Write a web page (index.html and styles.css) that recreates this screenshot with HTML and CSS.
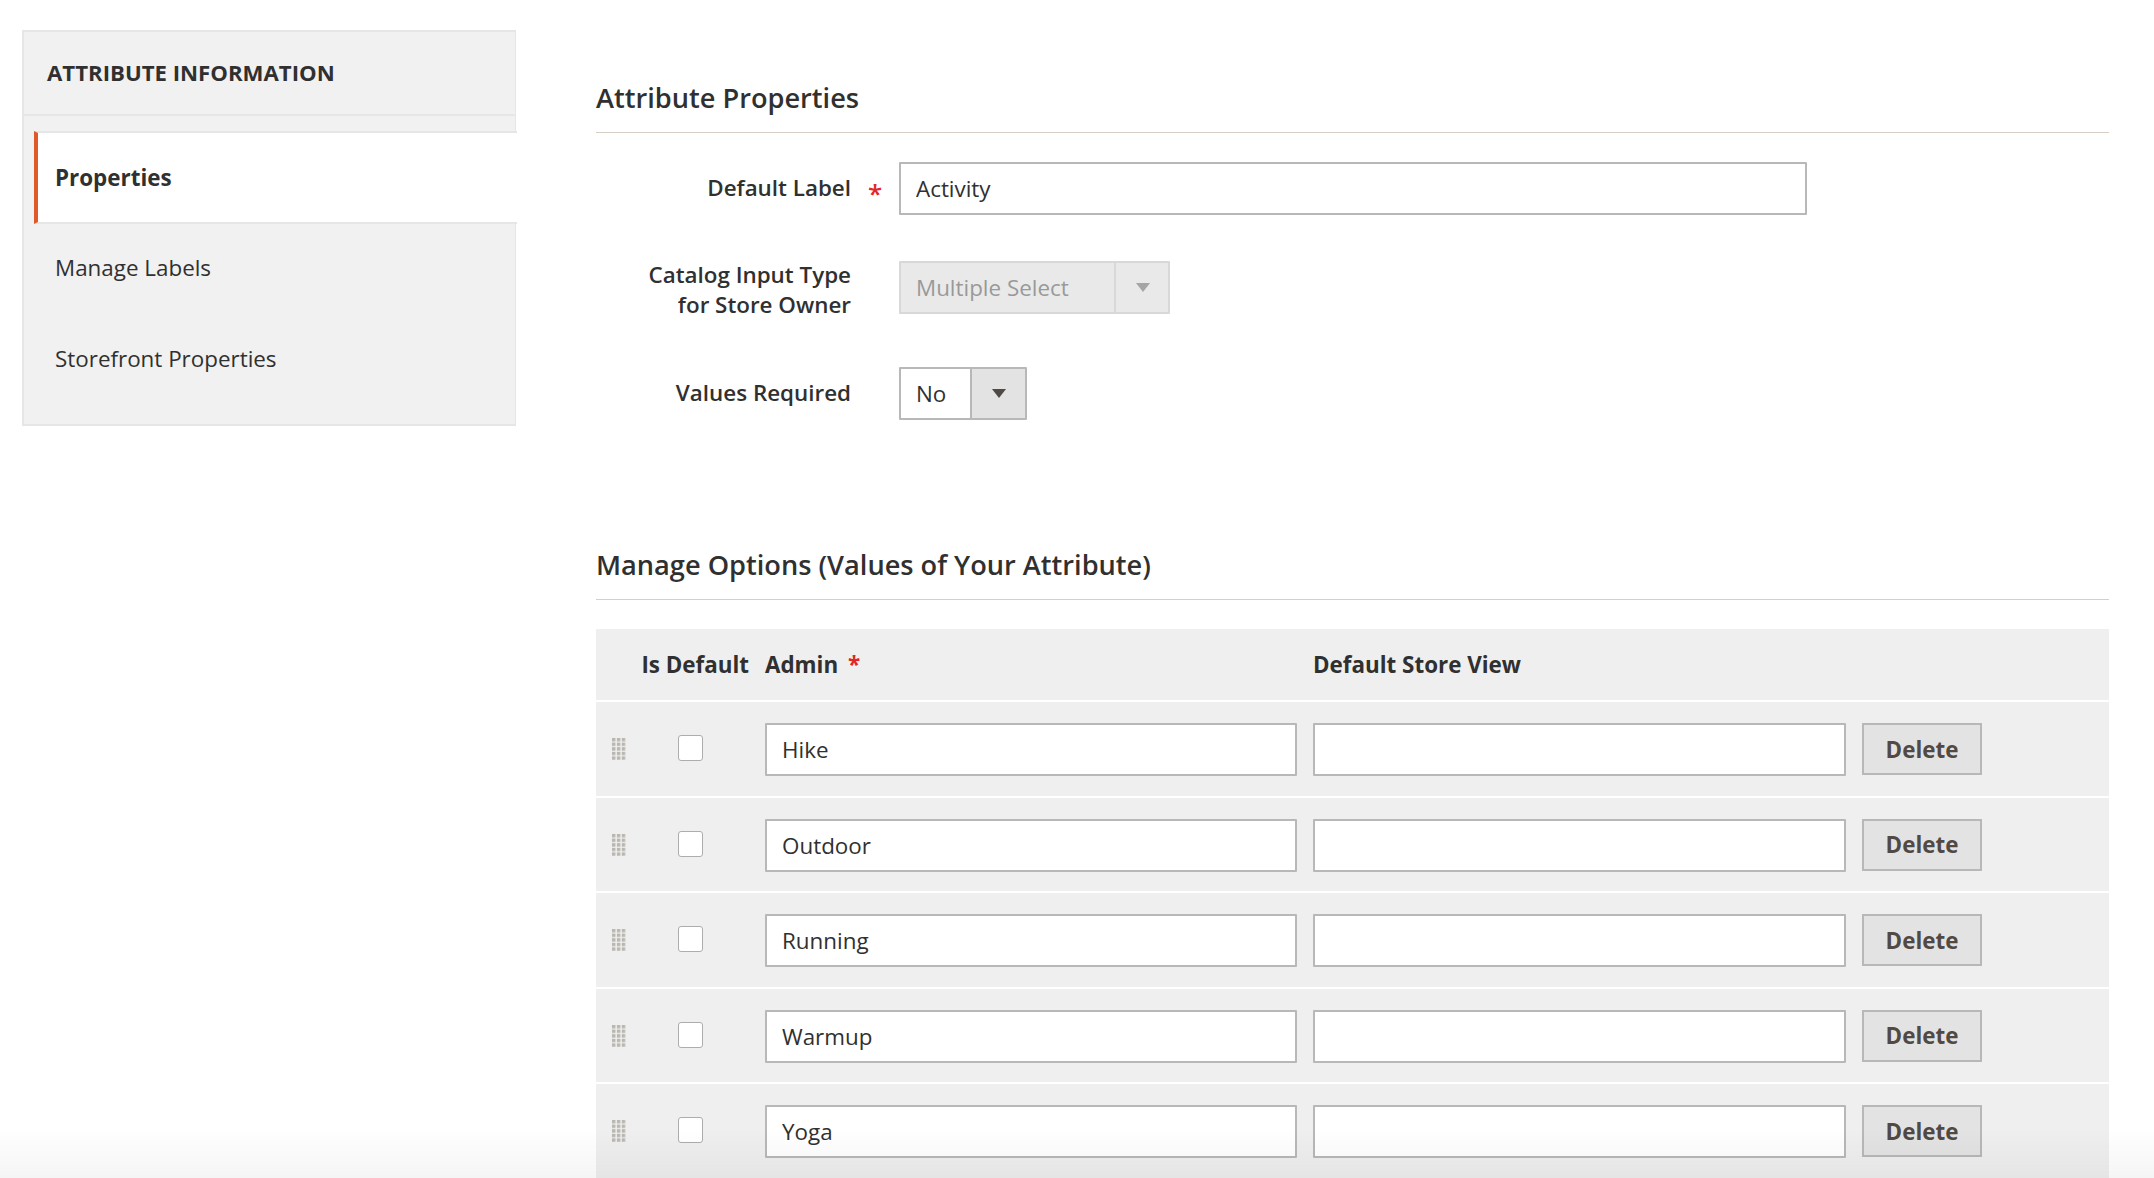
FILE: index.html
```html
<!DOCTYPE html>
<html lang="en">
<head>
    <meta charset="UTF-8">
    <title>Attribute Information</title>
    <link rel="stylesheet" href="styles.css">
</head>
<body>
    <div class="page">
        <aside class="side">
            <h3 class="side-title">ATTRIBUTE INFORMATION</h3>
            <ul class="side-nav">
                <li class="side-item active">Properties</li>
                <li class="side-item">Manage Labels</li>
                <li class="side-item">Storefront Properties</li>
            </ul>
        </aside>

        <main class="content">
            <h2 class="section-title">Attribute Properties</h2>
            <div class="fields">
                <div class="field">
                    <label class="field-label">Default Label</label>
                    <span class="field-req">*</span>
                    <input class="text-input wide" type="text" value="Activity">
                </div>
                <div class="field field-tall">
                    <label class="field-label">Catalog Input Type<br>for Store Owner</label>
                    <span class="field-req"></span>
                    <div class="fake-select disabled">
                        <span class="fake-value">Multiple Select</span>
                        <span class="fake-arrow"><i class="caret"></i></span>
                    </div>
                </div>
                <div class="field">
                    <label class="field-label">Values Required</label>
                    <span class="field-req"></span>
                    <div class="fake-select small">
                        <span class="fake-value">No</span>
                        <span class="fake-arrow"><i class="caret"></i></span>
                    </div>
                </div>
            </div>

            <h2 class="section-title second">Manage Options (Values of Your Attribute)</h2>
            <div class="options">
                <div class="opt-row opt-head">
                    <span></span>
                    <span class="opt-default-head">Is Default</span>
                    <span>Admin <em class="req-star">*</em></span>
                    <span>Default Store View</span>
                    <span></span>
                </div>
                <div class="opt-row">
                    <svg class="grip" width="14" height="22"><rect width="14" height="22" fill="url(#dots)"/></svg>
                    <span class="check-cell"><input class="check" type="checkbox"></span>
                    <input class="text-input" type="text" value="Hike">
                    <input class="text-input" type="text">
                    <button class="del-btn">Delete</button>
                </div>
                <div class="opt-row">
                    <svg class="grip" width="14" height="22"><rect width="14" height="22" fill="url(#dots)"/></svg>
                    <span class="check-cell"><input class="check" type="checkbox"></span>
                    <input class="text-input" type="text" value="Outdoor">
                    <input class="text-input" type="text">
                    <button class="del-btn">Delete</button>
                </div>
                <div class="opt-row">
                    <svg class="grip" width="14" height="22"><rect width="14" height="22" fill="url(#dots)"/></svg>
                    <span class="check-cell"><input class="check" type="checkbox"></span>
                    <input class="text-input" type="text" value="Running">
                    <input class="text-input" type="text">
                    <button class="del-btn">Delete</button>
                </div>
                <div class="opt-row">
                    <svg class="grip" width="14" height="22"><rect width="14" height="22" fill="url(#dots)"/></svg>
                    <span class="check-cell"><input class="check" type="checkbox"></span>
                    <input class="text-input" type="text" value="Warmup">
                    <input class="text-input" type="text">
                    <button class="del-btn">Delete</button>
                </div>
                <div class="opt-row">
                    <svg class="grip" width="14" height="22"><rect width="14" height="22" fill="url(#dots)"/></svg>
                    <span class="check-cell"><input class="check" type="checkbox"></span>
                    <input class="text-input" type="text" value="Yoga">
                    <input class="text-input" type="text">
                    <button class="del-btn">Delete</button>
                </div>
            </div>
        </main>
    </div>
    <div class="bottom-fade"></div>

    <svg width="0" height="0" class="defs">
        <defs>
            <pattern id="dots" width="4.9" height="4.6" patternUnits="userSpaceOnUse">
                <rect width="3.4" height="3.4" fill="#bab6b0"/>
            </pattern>
        </defs>
    </svg>
</body>
</html>
```

FILE: styles.css
```css
* {
    box-sizing: border-box;
}

html, body {
    margin: 0;
    height: 1178px;
    overflow: hidden;
    background-color: #fff;
}

body {
    font-family: "Open Sans", sans-serif;
    font-size: 22.4px;
    color: #303030;
}

.page {
    display: flex;
    padding: 30px 45px 0 22px;
}

/* left tabs */
.side {
    flex: 0 0 494px;
    height: 396px;
    background-color: #f1f1f1;
    border: 2px solid #e6e6e6;
    border-right-width: 1px;
}

.side-title {
    margin: 0;
    height: 84px;
    padding: 0 0 2px 23px;
    display: flex;
    align-items: center;
    font-size: 22.2px;
    font-weight: 700;
    border-bottom: 2px solid #e6e6e6;
}

.side-nav {
    list-style: none;
    margin: 15px 0 0;
    padding: 0;
}

.side-item {
    height: 91px;
    padding: 0 0 5px 31px;
    display: flex;
    align-items: center;
}

.side-item.active {
    height: 93px;
    margin: 0 -2px 0 10px;
    padding: 0 0 0 17px;
    font-weight: 700;
    background-color: #fff;
    border-left: 4px solid #e0592a;
    border-top: 2px solid #e6e6e6;
    border-bottom: 2px solid #e6e6e6;
}

/* main column */
.content {
    flex: 1;
    margin-left: 80px;
}

.section-title {
    margin: 0;
    height: 103px;
    padding-top: 48px;
    line-height: 40px;
    font-size: 27.2px;
    font-weight: 600;
    border-bottom: 1px solid #d6d0c4;
    color: #303030;
}

.section-title.second {
    height: 95px;
    padding-top: 40px;
}

.fields {
    display: flex;
    flex-direction: column;
    gap: 46px;
    padding: 29px 0 85px;
}

.field {
    display: flex;
    align-items: flex-start;
}

.field-tall {
    height: 60px;
}

.field-label {
    width: 255px;
    text-align: right;
    font-weight: 600;
    line-height: 30px;
    padding-top: 11px;
}

.field-tall .field-label {
    padding-top: 0;
    margin-top: -1px;
}

.field-req {
    width: 48px;
    text-align: center;
    color: #e22626;
    font-size: 26px;
    font-weight: 600;
    line-height: 30px;
    padding-top: 16px;
}

.text-input {
    height: 53px;
    padding: 0 15px;
    font-family: "Open Sans", sans-serif;
    font-size: 22.4px;
    color: #303030;
    background-color: #fff;
    border: 2px solid #b8b8b8;
    border-radius: 1px;
    outline: none;
}

.text-input.wide {
    width: 908px;
}

.fake-select {
    display: flex;
    height: 53px;
    width: 128px;
    background-color: #fff;
    border: 2px solid #b8b8b8;
    border-radius: 1px;
}

.fake-value {
    flex: 1;
    padding-left: 15px;
    line-height: 50px;
    color: #303030;
}

.fake-arrow {
    flex: 0 0 55px;
    display: flex;
    align-items: center;
    justify-content: center;
    background-color: #e3e3e3;
    border-left: 2px solid #b8b8b8;
}

.caret {
    width: 0;
    height: 0;
    border-left: 7px solid transparent;
    border-right: 7px solid transparent;
    border-top: 9px solid #514943;
}

.fake-select.disabled {
    width: 271px;
    background-color: #e9e9e9;
    border-color: #d8d8d8;
}

.disabled .fake-value {
    color: #999;
}

.disabled .fake-arrow {
    flex-basis: 54px;
    padding-left: 1px;
    background-color: #e9e9e9;
    border-left-color: #d8d8d8;
}

.disabled .caret {
    border-top-color: #a5a5a5;
}

/* options table */
.options {
    margin-top: 29px;
    background-color: #efefef;
}

.opt-row {
    display: grid;
    grid-template-columns: 16px 105px 532px 533px 120px;
    column-gap: 16px;
    align-items: start;
    height: 95.5px;
    padding: 21px 0 0 16px;
    border-top: 2px solid #fff;
}

.opt-head {
    height: 71px;
    padding-top: 0;
    align-items: center;
    border-top: 0;
    font-weight: 700;
}

.opt-default-head {
    justify-self: end;
    white-space: nowrap;
}

.req-star {
    font-style: normal;
    color: #e22626;
    margin-left: 4px;
}

.grip {
    margin-top: 15px;
}

.check-cell {
    display: flex;
    justify-content: center;
    padding: 12px 12px 0 0;
}

.check {
    appearance: none;
    margin: 0;
    width: 25px;
    height: 26px;
    background-color: #fff;
    border: 1px solid #adadad;
    border-radius: 3px;
}

.del-btn {
    height: 52px;
    padding: 0;
    font-family: "Open Sans", sans-serif;
    font-size: 22.4px;
    font-weight: 700;
    color: #514943;
    background-color: #e3e3e3;
    border: 2px solid #b8b8b8;
}

.bottom-fade {
    position: fixed;
    left: 0;
    right: 0;
    bottom: 0;
    height: 50px;
    background: linear-gradient(rgba(0, 0, 0, 0), rgba(0, 0, 0, 0.04));
    pointer-events: none;
}

.defs {
    position: absolute;
}
```
